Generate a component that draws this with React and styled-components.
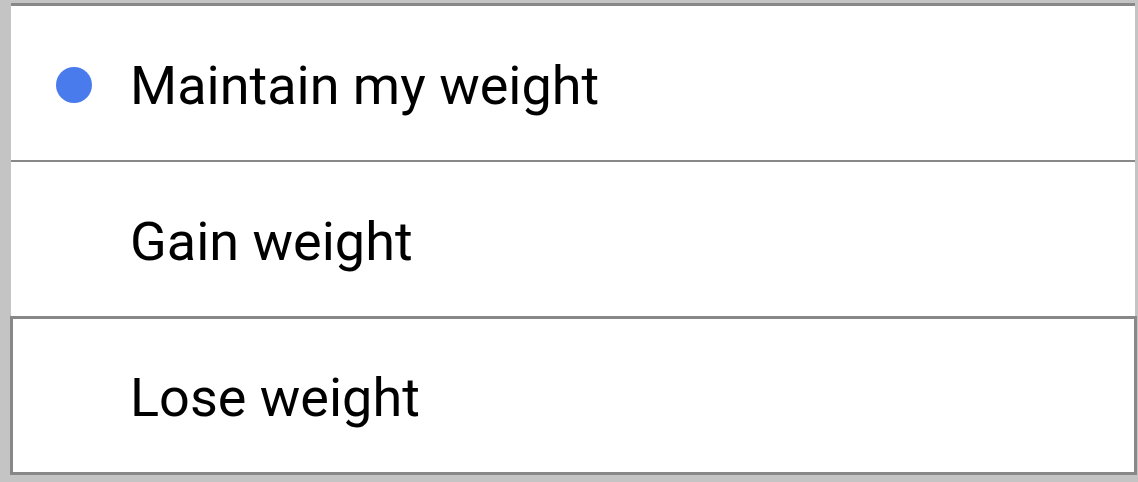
import { useState } from "react";
import styled, { createGlobalStyle } from "styled-components";

const GlobalStyle = createGlobalStyle`
  html, body {
    margin: 0;
    padding: 0;
    background: #c4c4c4;
  }
  body {
    font-family: Roboto, "Noto Sans", sans-serif;
  }
`;

const options = [
  { id: "maintain", label: "Maintain my weight" },
  { id: "gain", label: "Gain weight" },
  { id: "lose", label: "Lose weight" },
];

const App = () => {
  const [selected, setSelected] = useState("maintain");
  const focused = "lose";

  return (
    <>
      <GlobalStyle />
      <OptionList>
        {options.map((option) => (
          <OptionRow
            key={option.id}
            $focused={option.id === focused}
            onClick={() => setSelected(option.id)}
          >
            <Marker>{option.id === selected && <Dot />}</Marker>
            <Label>{option.label}</Label>
          </OptionRow>
        ))}
      </OptionList>
    </>
  );
};

export default App;

const OptionList = styled.div`
  display: flex;
  flex-direction: column;
  margin: 3px 3px 0 11px;
  border-top: 3px solid #888888;
`;

const OptionRow = styled.div`
  display: flex;
  flex-direction: row;
  align-items: center;
  gap: 38px;
  height: 154px;
  padding-left: 45px;
  background: #ffffff;
  border-bottom: 2px solid #888888;
  cursor: pointer;

  &:nth-child(2) {
    height: 154px;
    border-bottom: none;
  }

  ${({ $focused }) =>
    $focused &&
    `
    height: 153px;
    margin-left: -1px;
    margin-right: -2px;
    padding-left: 43px;
    border: 3px solid #888888;
  `}
`;

const Marker = styled.div`
  width: 36px;
  height: 36px;
  flex-shrink: 0;
  display: flex;
  align-items: center;
  justify-content: center;
  margin-top: 3px;
`;

const Dot = styled.span`
  width: 36px;
  height: 36px;
  border-radius: 50%;
  background: #4a7bec;
`;

const Label = styled.span`
  font-size: 54px;
  color: #000000;
  line-height: 1;
  margin-top: 5px;
`;
